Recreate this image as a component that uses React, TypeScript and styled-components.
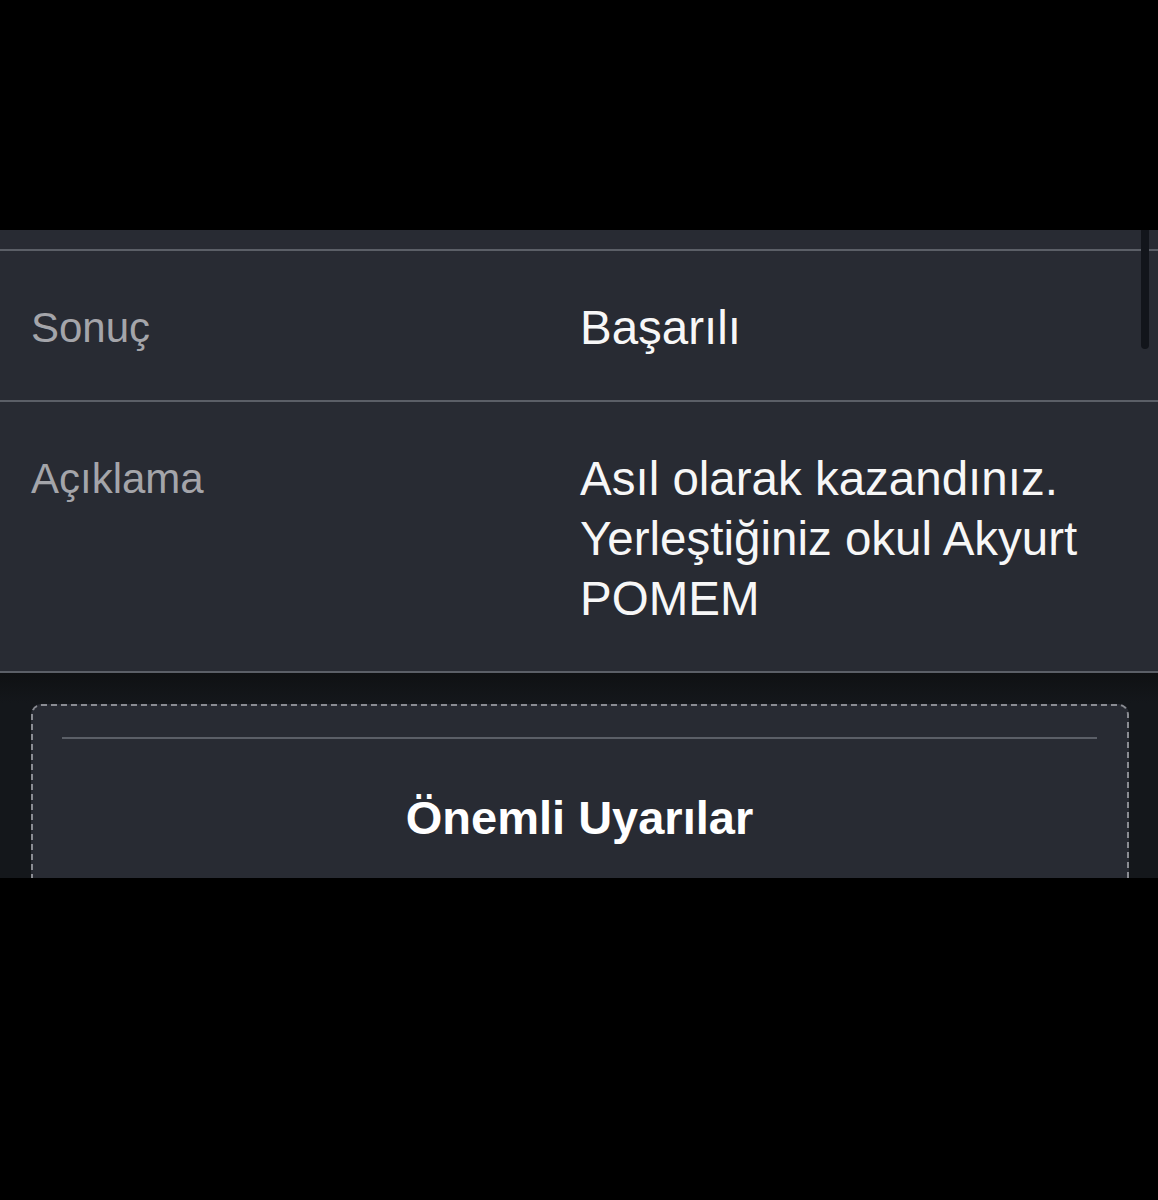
import styled, { createGlobalStyle } from 'styled-components';

const GlobalStyle = createGlobalStyle`
  html, body {
    margin: 0;
    padding: 0;
    background: #000;
  }
  body {
    font-family: "Liberation Sans", Arial, Helvetica, sans-serif;
    -webkit-font-smoothing: antialiased;
  }
`;

const rows = [
  { label: 'Sonuç', value: ['Başarılı'] },
  {
    label: 'Açıklama',
    value: ['Asıl olarak kazandınız.', 'Yerleştiğiniz okul Akyurt', 'POMEM'],
  },
];

export default function App() {
  return (
    <>
      <GlobalStyle />
      <Frame>
        <Letterbox $height={230} />
        <Screen>
          <ScrollThumb />
          <Table>
            <RowTail />
            {rows.map(row => (
              <Row key={row.label}>
                <Label>{row.label}</Label>
                <Value>
                  {row.value.map(line => (
                    <div key={line}>{line}</div>
                  ))}
                </Value>
              </Row>
            ))}
          </Table>
          <Notices>
            <NoticeCard>
              <Divider />
              <NoticeTitle>Önemli Uyarılar</NoticeTitle>
            </NoticeCard>
          </Notices>
        </Screen>
        <Letterbox $height={322} />
      </Frame>
    </>
  );
}

const Frame = styled.div`
  width: 1158px;
  height: 1200px;
  background: #000;
  display: flex;
  flex-direction: column;
`;

const Letterbox = styled.div<{ $height: number }>`
  height: ${p => p.$height}px;
  flex: none;
  background: #000;
`;

const Screen = styled.div`
  position: relative;
  height: 648px;
  flex: none;
  overflow: hidden;
  background: #14171b;
  display: flex;
  flex-direction: column;
`;

const ScrollThumb = styled.div`
  position: absolute;
  top: 0;
  left: 1141px;
  width: 8px;
  height: 119px;
  border-radius: 0 0 4px 4px;
  background: #12151b;
  z-index: 2;
`;

const Table = styled.div`
  background: #282b33;
  display: flex;
  flex-direction: column;
`;

const RowTail = styled.div`
  height: 19px;
  border-bottom: 2px solid #5b5f67;
`;

const Row = styled.div`
  display: grid;
  grid-template-columns: 549px 1fr;
  padding: 47px 30px 42px 31px;
  border-bottom: 2px solid #5b5f67;
  line-height: 60px;
`;

const Label = styled.div`
  font-size: 42px;
  color: #a4a5aa;
`;

const Value = styled.div`
  font-size: 47.5px;
  color: #f7f7f7;
`;

const Notices = styled.div`
  flex: 1;
  padding: 31px 29px 0 31px;
  background: linear-gradient(#0f1113 0px, #14171b 30px);
`;

const NoticeCard = styled.div`
  height: 100%;
  box-sizing: border-box;
  border: 2px dashed #8a8c93;
  border-bottom: none;
  border-radius: 10px 10px 0 0;
  background: #282b33;
  padding: 31px 30px 0 29px;
  display: flex;
  flex-direction: column;
`;

const Divider = styled.div`
  height: 2px;
  background: #5b5f67;
`;

const NoticeTitle = styled.h2`
  margin: 52px 0 0;
  font-size: 47px;
  font-weight: 700;
  line-height: 53px;
  color: #fff;
  text-align: center;
`;
